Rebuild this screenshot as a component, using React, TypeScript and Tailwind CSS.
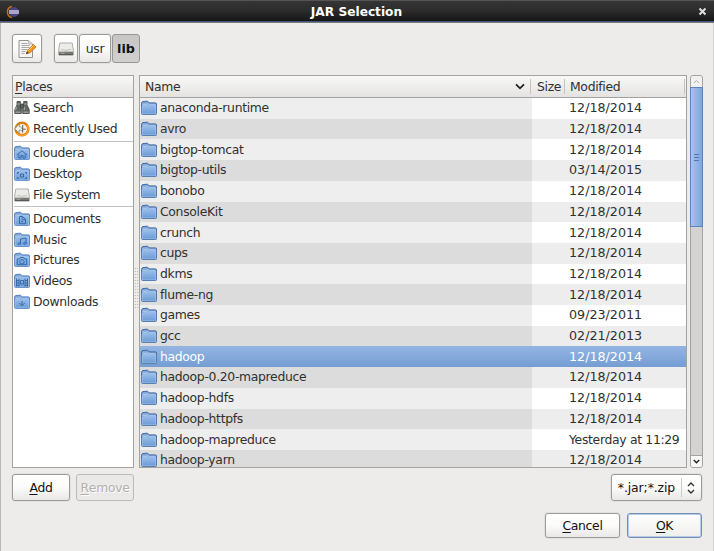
import React from "react";

type Kind = "home" | "desktop" | "doc" | "music" | "camera" | "film" | "down";

const glyphs: Record<Kind, React.ReactNode> = {
  home: <path d="M3 10 8 5.8l5 4.2M4.8 9.5v3.7H7v-2.7h2v2.7h2.2V9.5" />,
  desktop: <path d="M5 6.5H3.5V8M3.5 11V12.5H5M11 6.5h1.5V8M12.5 11V12.5H11M6.5 8h3v3h-3z" />,
  doc: <path d="M5.5 5.5h3l3 2.7v4.5h-6zM8.2 5.8V8.7h3M7 10.5h2" />,
  music: <path d="M6.5 11.8V7l5.5-1v5M6.5 11.8a1.2 1 0 1 1-2.4 0a1.2 1 0 1 1 2.4 0M12 11.3a1.2 1 0 1 1-2.4 0a1.2 1 0 1 1 2.4 0" />,
  camera: <path d="M3.3 7h2l1-1.4h3.4l1 1.4h2v5.7H3.3zM10.2 9.8a2.2 2.2 0 1 1-4.4 0a2.2 2.2 0 1 1 4.4 0" />,
  film: <path d="M2.5 5.5v8M5 5.5v8M11 5.5v8M13.5 5.5v8M6.5 7.5h3v3.5h-3zM2.5 7.5H5M2.5 10H5M2.5 12.5H5M11 7.5h2.5M11 10h2.5M11 12.5h2.5" />,
  down: <path d="M8 7v4.5M5.3 9 8 11.8 10.7 9" />,
};

function Folder({ kind }: { kind?: Kind }) {
  return (
    <svg width="16" height="16" viewBox="0 0 16 16" className="shrink-0">
      <path d="M.6 13.6V3.2Q.6 1.9 2 1.6L6 1.2q1 0 1.4.9l.4.8h6.5q1.2 0 1.2 1.1v9.6q0 .9-1 .9H1.6q-1 0-1-.9z" fill="#82a9db" stroke={kind ? "#5482be" : "#42699d"} />
      <path d="M1.3 4.3h4.9L7.4 3" fill="none" stroke="#b7d2f0" strokeWidth=".9" />
      <path d="M1.2 6.8q0-1 1-1h4.3l1.3-1.3h6q1 0 1 1v8.4H1.2z" fill="url(#folderFace)" stroke="#acccf0" strokeWidth=".6" />
      {kind && <g fill="none" stroke="#356ba9" strokeWidth="1">{glyphs[kind]}</g>}
    </svg>
  );
}

function Drive() {
  return (
    <svg width="16" height="16" viewBox="0 0 16 16" className="shrink-0">
      <path d="M1.8 2h12.4l1.3 8.3v3.2H.5v-3.2z" fill="#ecece9" stroke="#aeafac" />
      <path d="M1 10.3h14v3.4H1z" fill="#777975" />
      <path d="M.8 10.2h14.4" stroke="#d5d5d2" />
      <path d="M.8 13.8h14.4" stroke="#454743" />
      <path d="M3 8.2q5 2.4 10 0" fill="none" stroke="#c3c4c0" />
      <path d="M2.5 12.1h4" stroke="#a9aba7" />
    </svg>
  );
}

function Binoculars() {
  return (
    <svg width="16" height="16" viewBox="0 0 16 16" className="shrink-0">
      <g fill="#626662" stroke="#3c403d" strokeWidth=".8">
        <path d="M3 1.5h3.3V5l1 2v6.5H.8V9.5L3 5z" />
        <path d="M9.7 1.5H13V5l2.2 4.5v4H8.7V7l1-2z" />
        <path d="M6.5 4h3v4h-3z" />
      </g>
      <path d="M3.5 4h2.3M10.2 4h2.3M2.5 7l-1 3M10.3 7v3" stroke="#b4b8b3" />
      <path d="M1.5 12.2h5M9.5 12.2h5" stroke="#969b95" strokeWidth="1.5" />
    </svg>
  );
}

function Clock() {
  return (
    <svg width="16" height="16" viewBox="0 0 16 16" className="shrink-0">
      <circle cx="8" cy="8" r="6.3" fill="#f4f3ea" stroke="#e07f0a" strokeWidth="2.6" />
      <path d="M2.6 12A6.4 6.4 0 0 0 13 4" fill="none" stroke="#ff9c27" strokeWidth="1.6" />
      <path d="M.8 7.8 5.2 3v2.7q3.5 0 3.3 5-1.2-2-3.3-1.7v3z" fill="#f7f7ef" stroke="#83847c" strokeWidth=".8" />
      <path d="M8.7 4v4.2h3M8.7 8.5v3" fill="none" stroke="#5d5d59" />
    </svg>
  );
}

function Edit() {
  return (
    <svg width="20" height="20" viewBox="0 0 20 20">
      <path d="M2 1.5h9.5l4 3.5v13.5H2z" fill="#f5f5f3" stroke="#91938f" />
      <path d="M11.5 1.5V5h4" fill="#ddd" stroke="#aaa" strokeWidth=".7" />
      <path d="M4.5 4.5h6M4.5 6.5h8M4.5 8.5h8M4.5 10.5h6M4.5 12.5h4M4.5 14.5h3" stroke="#a8aaa6" />
      <path d="m9.5 14.3 1.2-3.1 5.8-5.7 2.5 2.4-5.9 5.9z" fill="#f6981d" stroke="#c56c0d" strokeWidth=".8" />
      <path d="m11.5 11.4 5.2-5" stroke="#ffcf70" />
      <path d="m8.8 15.3 1.2-2.8 1.8 1.7z" fill="#443b31" />
    </svg>
  );
}

const box = "flex items-center justify-center rounded-[3px] border border-[#9d9b98] bg-linear-to-b from-white via-[#fbfbfa] to-[#e9e8e6] shadow-[0_0_0_1px_#e2e1df]";
const head = "bg-linear-to-b from-[#f8f8f7] to-[#e4e3e1] border-b border-[#a5a3a0]";

function Place({ icon, label }: { icon: React.ReactNode; label: string }) {
  return <div className="flex h-[20.7px] items-center gap-[3px] pl-px"><span className="flex w-4">{icon}</span><span>{label}</span></div>;
}
function Rule() {
  return <div className="my-[1.3px] ml-px h-px bg-[#c2c2c2]" />;
}

const files = [
  ["anaconda-runtime", "12/18/2014"], ["avro", "12/18/2014"], ["bigtop-tomcat", "12/18/2014"],
  ["bigtop-utils", "03/14/2015"], ["bonobo", "12/18/2014"], ["ConsoleKit", "12/18/2014"],
  ["crunch", "12/18/2014"], ["cups", "12/18/2014"], ["dkms", "12/18/2014"],
  ["flume-ng", "12/18/2014"], ["games", "09/23/2011"], ["gcc", "02/21/2013"],
  ["hadoop", "12/18/2014"], ["hadoop-0.20-mapreduce", "12/18/2014"], ["hadoop-hdfs", "12/18/2014"],
  ["hadoop-httpfs", "12/18/2014"], ["hadoop-mapreduce", "Yesterday at 11:29"], ["hadoop-yarn", "12/18/2014"],
];

export default function App() {
  return (
    <div className="flex h-[551px] w-[714px] flex-col overflow-hidden bg-[#edeceb] font-['DejaVu_Sans',sans-serif] text-[12.4px] leading-[20px] tracking-[-0.32px] whitespace-nowrap text-[#303030]">
      <svg width="0" height="0" className="absolute">
        <defs><linearGradient id="folderFace" x1="0" y1="0" x2="0" y2="1"><stop stopColor="#9bc0ea" /><stop offset="1" stopColor="#6c9bd4" /></linearGradient></defs>
      </svg>
      <header className="flex h-[23px] shrink-0 items-center border-t border-b border-t-[#555] border-b-[#77797b] bg-linear-to-b from-[#353535] via-[#2b2b2b] to-[#131313] pr-[7px] pl-[6px] shadow-[inset_0_-1px_#3f587c]">
        <svg width="14" height="14" viewBox="0 0 14 14">
          <path d="M6 1.5A5.6 5.6 0 0 0 6 12.5" fill="none" stroke="#c87511" strokeWidth="1.4" />
          <circle cx="8" cy="7" r="5" fill="#4b4382" />
          <path d="M3 6h10M3 8h10" stroke="#c9c5df" strokeWidth="1.3" />
        </svg>
        <h1 className="flex-1 pr-[5px] text-center text-[12.2px] font-bold tracking-normal text-white">JAR Selection</h1>
        <svg width="9" height="9" viewBox="0 0 9 9"><path d="m1.5 1.5 6 6m0-6-6 6" stroke="#ddd" strokeWidth="2" /></svg>
      </header>
      <main className="flex min-h-0 flex-1 flex-col border-r border-l border-r-[#d5d4d2] border-l-[#b9b8b6] pr-[11px] pl-[11px]">
        <nav className="mt-[11px] flex h-[29px] shrink-0">
          <button className={`${box} w-[30px]`}><Edit /></button>
          <button className={`${box} ml-[12px] w-[24px]`}><Drive /></button>
          <button className={`${box} ml-px w-[32px]`}>usr</button>
          <button className="ml-px flex w-[28px] items-center justify-center rounded-[3px] border border-[#989693] bg-linear-to-b from-[#c8c6c4] to-[#d2d0ce] pt-px text-[12.7px] font-bold tracking-normal text-[#111]">lib</button>
        </nav>
        <div className="mt-[12px] flex h-[393px] shrink-0">
          <aside className="w-[122px] shrink-0 border border-[#a5a3a0] bg-white">
            <div className={`${head} h-[22px] pt-px pl-[2px]`}><u className="underline-offset-2">P</u>laces</div>
            <Place icon={<Binoculars />} label="Search" />
            <Place icon={<Clock />} label="Recently Used" />
            <Rule />
            <Place icon={<Folder kind="home" />} label="cloudera" />
            <Place icon={<Folder kind="desktop" />} label="Desktop" />
            <Place icon={<Drive />} label="File System" />
            <Rule />
            <Place icon={<Folder kind="doc" />} label="Documents" />
            <Place icon={<Folder kind="music" />} label="Music" />
            <Place icon={<Folder kind="camera" />} label="Pictures" />
            <Place icon={<Folder kind="film" />} label="Videos" />
            <Place icon={<Folder kind="down" />} label="Downloads" />
          </aside>
          <div className="flex w-[5px] shrink-0 items-center justify-center pt-[32px]">
            <div className="h-[42px] w-[5px] bg-[radial-gradient(#aaa_0.6px,transparent_0.7px)] bg-size-[2.5px_3px]" />
          </div>
          <section className="flex w-[548px] shrink-0 flex-col overflow-hidden border border-[#a5a3a0] bg-white">
            <div className={`${head} flex h-[22px] shrink-0`}>
              <div className="flex w-[390px] items-center justify-between pr-[5px] pl-[5px]"><span>Name</span><svg width="10" height="7" viewBox="0 0 10 7"><path d="m1 1.3 4 4 4-4" fill="none" stroke="#222" strokeWidth="1.8" /></svg></div>
              <div className="my-[3px] flex w-[34px] items-center border-l border-[#c5c3c0] pl-[6px]">Size</div>
              <div className="my-[3px] flex flex-1 items-center border-l border-[#c5c3c0] pl-[5px]">Modified</div>
              <div className="my-[3px] w-[2px] border-l border-[#c5c3c0]" />
            </div>
            {files.map(([name, date], i) => {
              const on = name === "hadoop";
              return (
                <div key={name} className={`flex h-[20.71px] shrink-0 ${on ? "bg-linear-to-b from-[#94b5e3] to-[#759dd2] text-white" : i % 2 ? "bg-[#ededed]" : "bg-white"}`}>
                  <div className={`flex w-[392px] shrink-0 items-center gap-[3px] pl-px ${on ? "" : i % 2 ? "bg-[#dcdcdc]" : "bg-[#eeeeee]"}`}><Folder /><span>{name}</span></div>
                  <div className={`flex items-center pl-[37px] ${date.startsWith("Y") ? "" : "text-[12.7px] tracking-normal"}`}>{date}</div>
                </div>
              );
            })}
          </section>
          <div className="ml-[3px] flex w-[13px] shrink-0 flex-col rounded-[3px] border border-[#a5a3a0] bg-[#d4d3d1]">
            <div className="flex h-[11px] items-center justify-center rounded-t-[2px] bg-[#f2f1f0]"><svg width="7" height="5" viewBox="0 0 7 5"><path d="m1 4 2.5-2.5L6 4" fill="none" stroke="#aaa" /></svg></div>
            <div className="-mx-px flex h-[140px] flex-col items-center justify-center gap-[2px] border border-[#5d84ba] bg-linear-to-r from-[#a6c4ec] to-[#7ea5db]">
              <i className="h-px w-[5px] bg-[#4d77b0]" /><i className="h-px w-[5px] bg-[#4d77b0]" /><i className="h-px w-[5px] bg-[#4d77b0]" />
            </div>
            <div className="mt-auto flex h-[12px] items-center justify-center rounded-b-[2px] border-t border-[#a5a3a0] bg-[#f7f7f6]"><svg width="7" height="5" viewBox="0 0 7 5"><path d="m.8 1 2.7 2.7L6.2 1" fill="none" stroke="#222" strokeWidth="1.4" /></svg></div>
          </div>
        </div>
        <div className="mt-[6px] flex h-[27px] shrink-0">
          <button className={`${box} w-[58px] text-[#111]`}><u className="underline-offset-2">A</u>dd</button>
          <button className="ml-[6px] flex w-[58px] items-center justify-center rounded-[3px] border border-[#bdbbb9] bg-[#eae9e7] text-[#b2b0ae] [text-shadow:1px_1px_white]"><u className="underline-offset-2">R</u>emove</button>
          <button className={`${box} ml-auto w-[91px] text-[#111]`}><span className="border-r border-[#cccac7] pr-[6px] leading-[19px] tracking-[-0.1px]">*.jar;*.zip</span><svg className="ml-[5px]" width="8" height="12" viewBox="0 0 8 12"><path d="m1 4 3-3 3 3M1 8l3 3 3-3" fill="none" stroke="#333" strokeWidth="1.4" /></svg></button>
        </div>
        <footer className="mt-[12px] flex h-[25px] shrink-0 justify-end gap-[7px] text-[#111]">
          <button className={`${box} w-[75px]`}><u className="underline-offset-2">C</u>ancel</button>
          <button className="flex w-[75px] items-center justify-center rounded-[3px] border border-[#718fb9] bg-linear-to-b from-white to-[#efeeec] shadow-[inset_0_0_0_1px_#b9cae3]"><u className="underline-offset-2">O</u>K</button>
        </footer>
      </main>
    </div>
  );
}
